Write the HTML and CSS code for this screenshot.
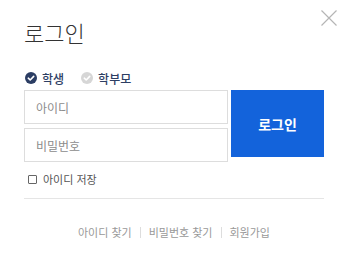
FILE: index.html
```html
<!DOCTYPE html>
<html lang="ko">

<head>
    <meta charset="UTF-8">
    <meta name="viewport" content="width=device-width, initial-scale=1.0">
    <title>로그인</title>
    <link rel="stylesheet" href="styles.css">
</head>

<body>
    <div class="popup">
        <button class="closeBtn" aria-label="닫기">
            <svg width="16" height="16" viewBox="0 0 16 16">
                <path d="M0.5 0.5 L15.5 15.5 M15.5 0.5 L0.5 15.5" stroke="#b5b5b5" stroke-width="1.2" fill="none" />
            </svg>
        </button>

        <h1 class="title">로그인</h1>

        <div class="types">
            <label class="type active">
                <span class="check">
                    <svg width="12" height="12" viewBox="0 0 12 12">
                        <path d="M3.3 6.2 L5.2 8 L8.7 4.4" stroke="#fff" stroke-width="1.6" fill="none" stroke-linecap="round" stroke-linejoin="round" />
                    </svg>
                </span>
                학생
            </label>
            <label class="type">
                <span class="check">
                    <svg width="12" height="12" viewBox="0 0 12 12">
                        <path d="M3.3 6.2 L5.2 8 L8.7 4.4" stroke="#fff" stroke-width="1.6" fill="none" stroke-linecap="round" stroke-linejoin="round" />
                    </svg>
                </span>
                학부모
            </label>
        </div>

        <form class="loginForm">
            <div class="fields">
                <input class="field" type="text" placeholder="아이디">
                <input class="field" type="password" placeholder="비밀번호">
            </div>
            <button class="loginBtn" type="button">로그인</button>
        </form>

        <label class="saveId">
            <span class="box"></span>
            아이디 저장
        </label>

        <div class="links">
            <a href="#">아이디 찾기</a>
            <span class="sep"></span>
            <a href="#">비밀번호 찾기</a>
            <span class="sep"></span>
            <a href="#">회원가입</a>
        </div>
    </div>
</body>

</html>
```

FILE: styles.css
```css
* {
    margin: 0;
    padding: 0;
    box-sizing: border-box;
}

body {
    background-color: #fff;
    font-family: "Noto Sans CJK KR", "Noto Sans", sans-serif;
    color: #333;
}

.popup {
    position: relative;
    width: 348px;
    height: 255px;
    padding: 0 24px;
}

.closeBtn {
    position: absolute;
    top: 10px;
    right: 11px;
    width: 16px;
    height: 16px;
    border: none;
    background: none;
    cursor: pointer;
}

.closeBtn svg {
    display: block;
}

.title {
    padding-top: 17px;
    height: 66px;
    font-size: 22px;
    line-height: 30px;
    font-weight: 300;
    color: #333;
}

.types {
    display: flex;
    gap: 17px;
    height: 24px;
    align-items: center;
    margin-left: 1px;
}

.type {
    display: flex;
    align-items: center;
    gap: 5px;
    font-size: 12px;
    font-weight: 500;
    color: #2d3e63;
    cursor: pointer;
}

.check {
    display: flex;
    width: 12px;
    height: 12px;
    border-radius: 50%;
    background-color: #d6d6d6;
}

.type.active .check {
    background-color: #2b3d63;
}

.loginForm {
    display: flex;
    gap: 3px;
}

.fields {
    display: flex;
    flex-direction: column;
    gap: 4px;
    width: 204px;
}

.field {
    height: 34px;
    border: 1px solid #ddd;
    padding: 0 11px;
    font-family: inherit;
    font-size: 12px;
    color: #333;
    outline: none;
}

.field::placeholder {
    color: #8c8c8c;
}

.loginBtn {
    width: 93px;
    height: 67px;
    border: none;
    background-color: #1363db;
    color: #fff;
    font-family: inherit;
    font-size: 14px;
    font-weight: 700;
    cursor: pointer;
}

.saveId {
    display: flex;
    align-items: center;
    gap: 6px;
    margin: 7px 0 0 4px;
    height: 20px;
    font-size: 11px;
    color: #555;
}

.box {
    width: 9px;
    height: 9px;
    border: 1px solid #666;
    border-radius: 1px;
}

.links {
    display: flex;
    justify-content: center;
    align-items: center;
    gap: 8px;
    margin-top: 9px;
    padding-top: 25px;
    border-top: 1px solid #e5e5e5;
    font-size: 11px;
}

.links a {
    color: #999;
    text-decoration: none;
}

.sep {
    width: 1px;
    height: 11px;
    background-color: #ddd;
}
```
